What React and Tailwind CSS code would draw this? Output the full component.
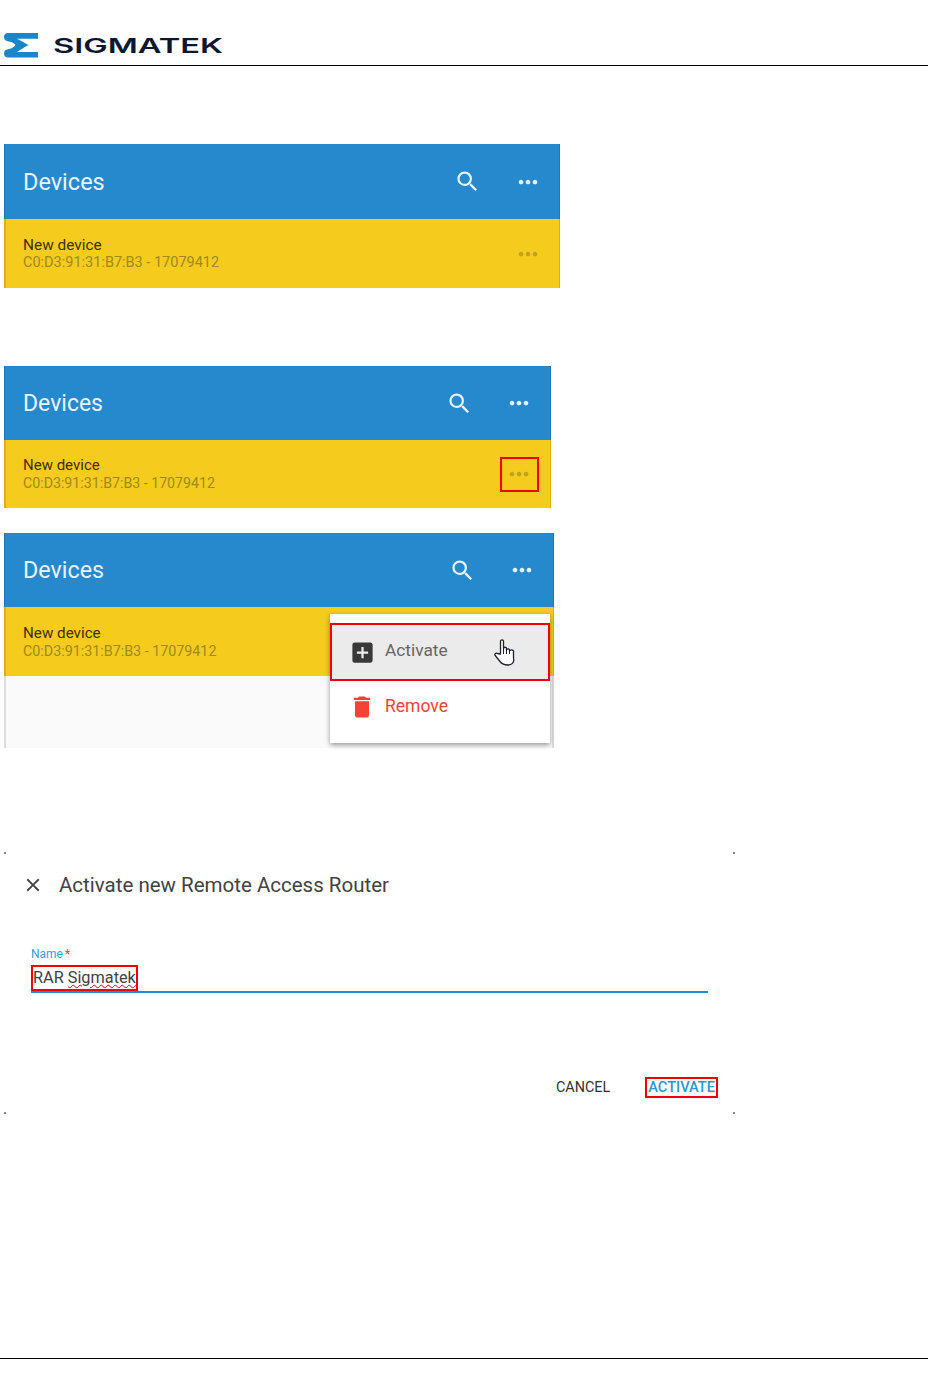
import { MdSearch, MdMoreHoriz, MdAddBox, MdDelete, MdClose } from "react-icons/md";

const font = "font-['Roboto',sans-serif]";

const Logo = () => (
  <svg width="222" height="28" viewBox="0 0 222 28" className="block">
    {/* blue S mark */}
    <path
      d="M4 1 H34 V6.7 H13 C16 8 20 10.5 24.5 13 C20 15.5 16 18 13 20 H34 V25.5 H4 C1.5 25.5 0 24 0 21.5 C0 18.5 2 17.5 5 17 C8 16.5 10 15 11.5 13 C10 11 8 10 5 9.5 C2 9 0 8 0 5 C0 2.5 1.5 1 4 1 Z"
      fill="#1a86c8"
    />
    <text
      x="49"
      y="21"
      textLength="170"
      lengthAdjust="spacingAndGlyphs"
      fontFamily="Inter, sans-serif"
      fontWeight="600"
      fontSize="20"
      fill="#0b1730"
    >
      SIGMATEK
    </text>
  </svg>
);

const HandCursor = () => (
  <svg width="22" height="27" viewBox="0 0 22 27" className="absolute left-[162px] top-[14px]">
    <path
      d="M6.5 15 V2.2 C6.5 .5 9.5 .5 9.5 2.2 V9.5 C9.5 7.8 12.5 7.8 12.5 9.5 V11 C12.5 9.5 15.5 9.5 15.5 11 V12 C15.5 10.5 19.5 10.5 19.5 12 V19 C20.5 23.5 18 26 14 26 C10 26 8 25 6 22.5 L1.2 16.5 C.2 15 2 13.5 3.5 14.5 Z"
      fill="white"
      stroke="#1c2030"
      strokeWidth="1.3"
      strokeLinejoin="round"
    />
    <path d="M9.5 9.5 V15 M12.5 11 V15 M15.5 12 V15" stroke="#1c2030" strokeWidth="1" fill="none" />
  </svg>
);

const DeviceCard = ({ widthClass, headerClass, rowClass, titleClass, gapClass, nameClass, idClass, highlight, extra }) => (
  <div className={`relative ${widthClass} ${font}`}>
    <div className={`flex items-center justify-between border-x border-[#1f76b0] bg-[#2789cd] pl-[18px] pr-[17px] ${headerClass}`}>
      <span className={`text-[#e8f4fb] ${titleClass}`}>Devices</span>
      <div className={`flex items-center text-[#e8f4fb] ${gapClass}`}>
        <MdSearch size={27} />
        <MdMoreHoriz size={28} />
      </div>
    </div>
    <div className={`flex items-center justify-between border-l-2 border-r border-[#d9b010] bg-[#f5cb1d] pl-[17px] pr-[17px] ${rowClass}`}>
      <div className="flex flex-col leading-[18px]">
        <span className={`text-[#3c3000] ${nameClass}`}>New device</span>
        <span className={`text-[#a08a1c] ${idClass}`}>C0:D3:91:31:B7:B3 - 17079412</span>
      </div>
      <div className="relative flex items-center text-[#c2a020]">
        <MdMoreHoriz size={28} />
        {highlight && <div className="absolute -left-[5px] -top-[3px] h-[35px] w-[39px] border-2 border-[#f00000]" />}
      </div>
    </div>
    {extra}
  </div>
);

const ContextMenu = () => (
  <div className="absolute left-[326px] top-[81px] h-[129px] w-[220px] bg-white pt-[9px] shadow-[0_2px_5px_rgba(0,0,0,0.4)]">
    <div className="relative flex h-[58px] items-center border-2 border-[#f00000] bg-[#ebebeb] pl-[17px] text-[#666666]">
      <MdAddBox size={27} className="text-[#383838]" />
      <span className="ml-[9px] pb-0.5 text-[17.3px]">Activate</span>
      <HandCursor />
    </div>
    <div className="flex h-[52px] items-center pl-[18px] text-[#f44336]">
      <MdDelete size={28} />
      <span className="ml-[9px] pb-0.5 text-[17.5px]">Remove</span>
    </div>
  </div>
);

const Tick = ({ className }) => <div className={`absolute h-[2px] w-[2px] bg-[#888888] ${className}`} />;

const ActivateDialog = () => (
  <div className={`relative ml-1 mt-[104px] h-[262px] w-[731px] ${font}`}>
    <Tick className="left-0 top-0" />
    <Tick className="right-0 top-0" />
    <Tick className="bottom-0 left-0" />
    <Tick className="bottom-0 right-0" />

    <div className="flex items-center pl-[18px] pt-[20px] text-[#424242]">
      <MdClose size={22} />
      <span className="ml-[15px] text-[20.5px] leading-[26px]">Activate new Remote Access Router</span>
    </div>

    <div className="ml-[27px] mt-[49px] w-[677px]">
      <div className="text-[12px] leading-[14px] text-[#3d9ad9]">
        Name<span className="ml-0.5 text-[#f44336]">*</span>
      </div>
      <div className="flex h-[32px] items-end border-b-2 border-[#2789cd]">
        <div className="flex h-[26px] items-center border-2 border-[#f00000] text-[16.3px] text-[#424242]">
          RAR&nbsp;<span className="underline decoration-[#f00000] decoration-wavy decoration-1">Sigmatek</span>
        </div>
      </div>
    </div>

    <div className="mt-[84px] flex items-center justify-end pr-[17px]">
      <span className="text-[14.4px] text-[#333333]">CANCEL</span>
      <span className="ml-[35px] flex h-[21px] items-center border-2 border-[#f00000] px-px text-[14.6px] font-medium text-[#2f96d8]">
        ACTIVATE
      </span>
    </div>
  </div>
);

export default function App() {
  return (
    <div className="flex h-[1391px] w-[950px] flex-col bg-white">
      <header className="flex h-[66px] w-[928px] items-end border-b border-black pb-[5px] pl-1">
        <Logo />
      </header>

      <div className="ml-1 mt-[78px]">
        <DeviceCard
          widthClass="w-[556px]"
          headerClass="h-[75px]"
          rowClass="h-[69px]"
          titleClass="pt-0.5 text-[23.5px]"
          gapClass="gap-[33px]"
          nameClass="text-[15.4px]"
          idClass="text-[14.5px]"
        />
      </div>

      <div className="ml-1 mt-[78px]">
        <DeviceCard
          widthClass="w-[547px]"
          headerClass="h-[74px]"
          rowClass="h-[68px]"
          titleClass="pt-0.5 text-[23px]"
          gapClass="gap-[32px]"
          nameClass="text-[15px]"
          idClass="text-[14.2px]"
          highlight
        />
      </div>

      <div className="ml-1 mt-[25px]">
        <DeviceCard
          widthClass="w-[550px]"
          headerClass="h-[74px]"
          rowClass="h-[69px]"
          titleClass="text-[23.3px]"
          gapClass="gap-[32px]"
          nameClass="text-[15.2px]"
          idClass="text-[14.3px]"
          extra={
            <>
              <div className="h-[72px] border-x-2 border-[#dddddd] bg-[#fafafa]" />
              <ContextMenu />
            </>
          }
        />
      </div>

      <ActivateDialog />

      <div className="mt-[244px] h-px w-[928px] bg-black" />
    </div>
  );
}
